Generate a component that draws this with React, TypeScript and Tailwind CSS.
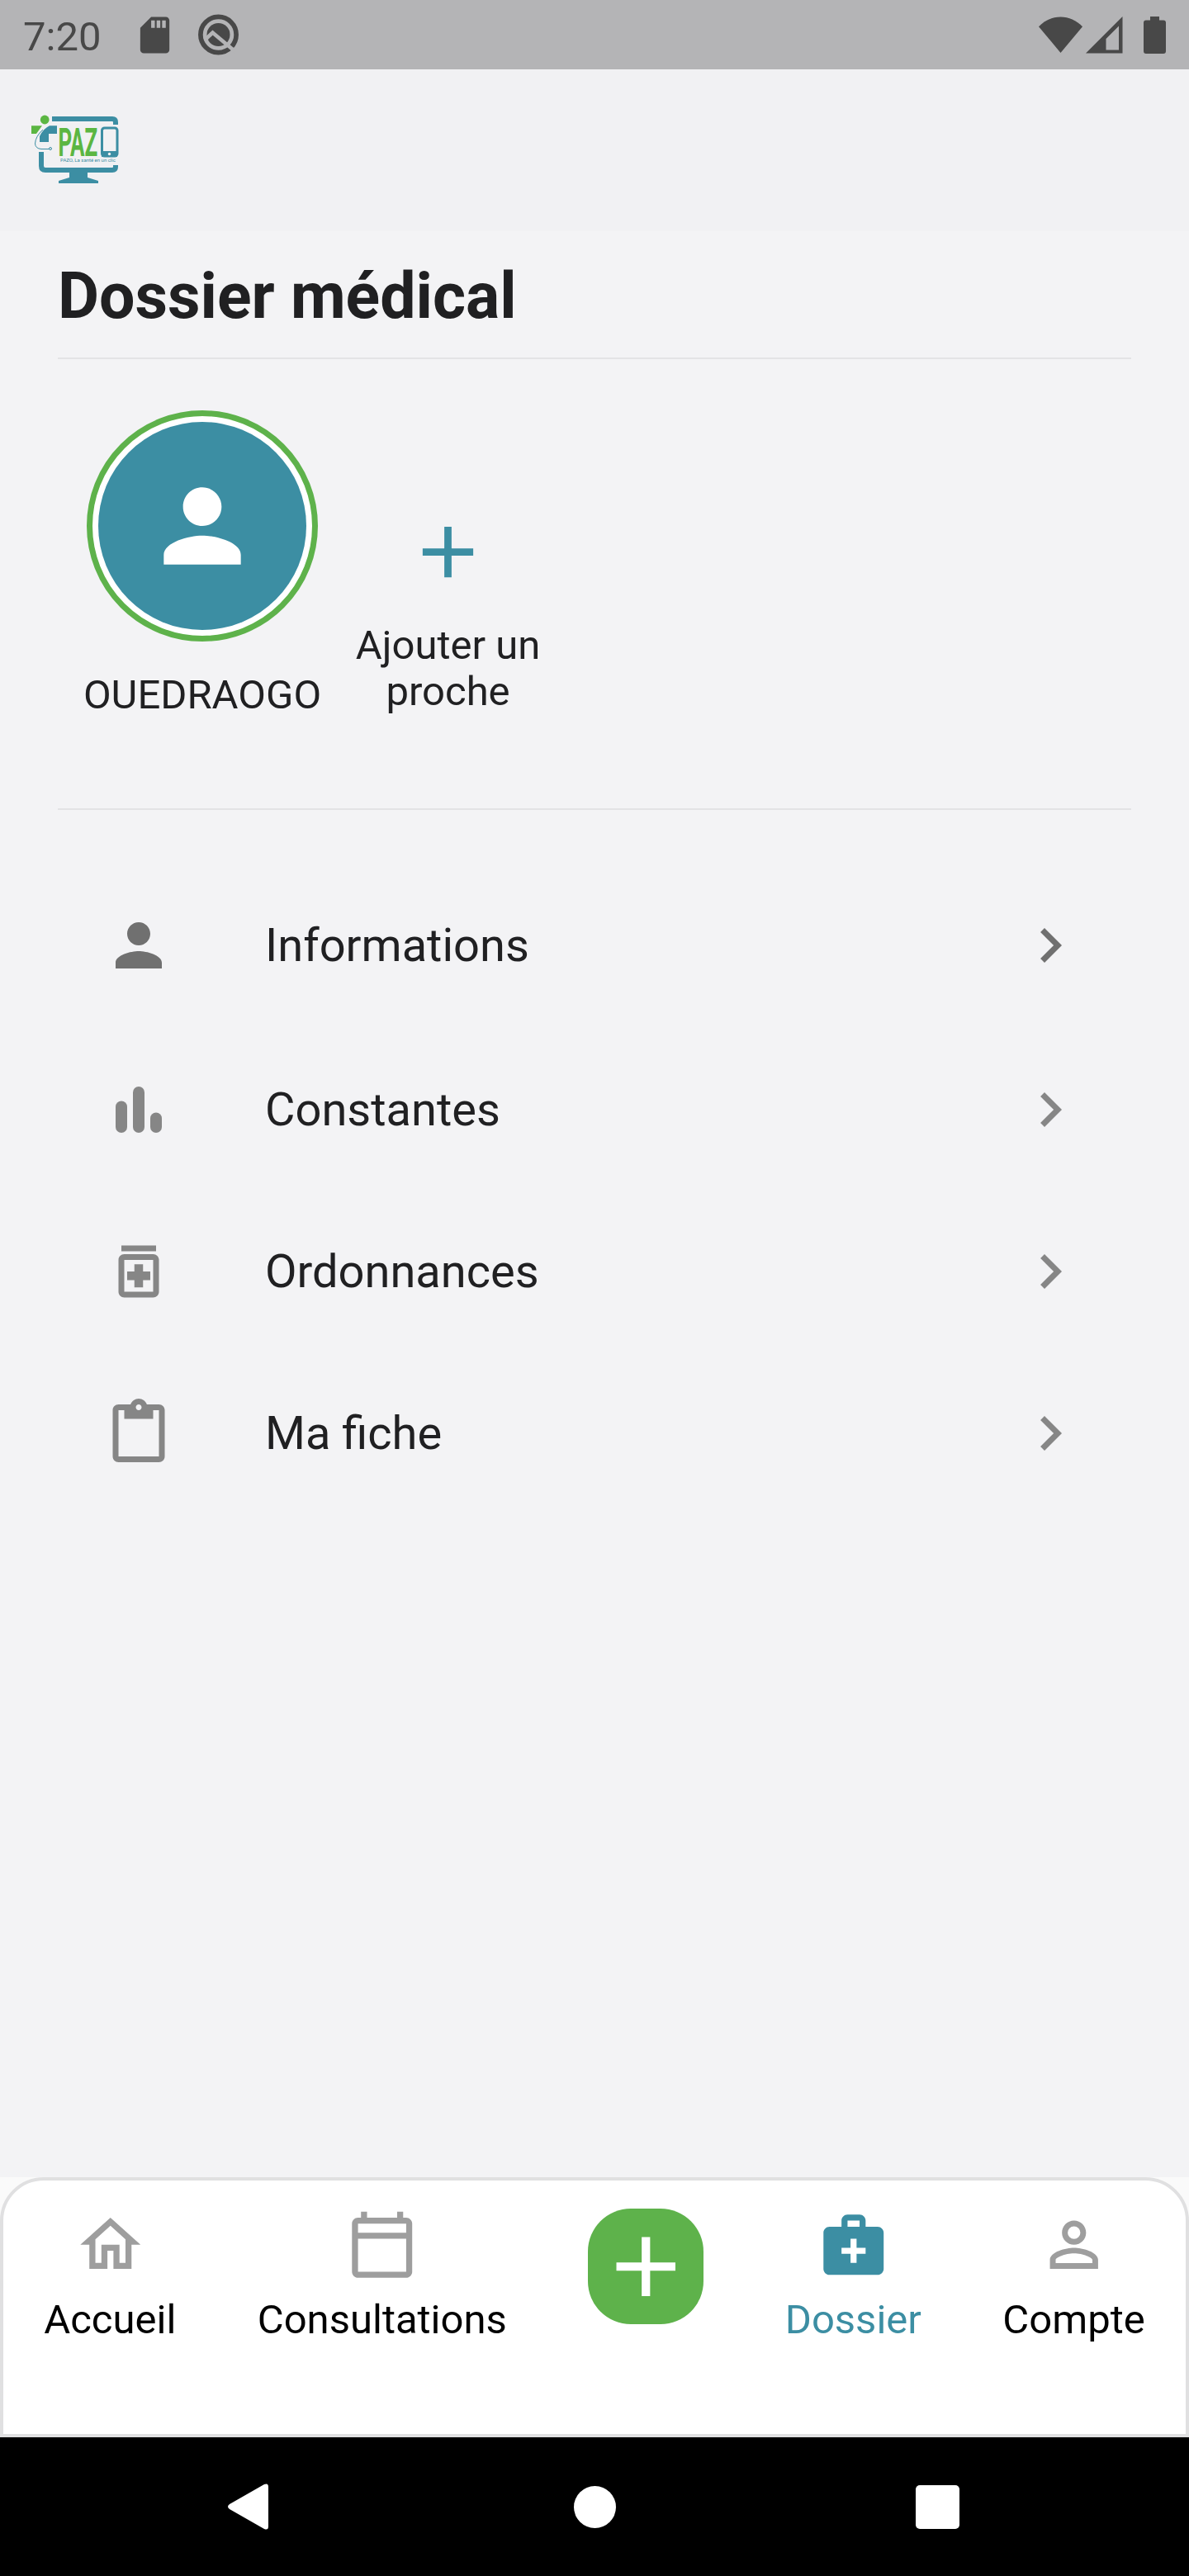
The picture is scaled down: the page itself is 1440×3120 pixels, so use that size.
import type { ReactNode } from 'react';
import {
  MdAdd,
  MdChevronRight,
  MdContentPaste,
  MdMedicalServices,
  MdOutlineCalendarToday,
  MdOutlineHome,
  MdPerson,
  MdPersonOutline,
  MdSdCard,
} from 'react-icons/md';

function StatusBar() {
  return (
    <div className="flex h-[84px] items-center justify-between bg-[#b4b4b6] pl-[28px] pr-[28px] text-[#484848]">
      <div className="flex items-center">
        <span className="w-[133px] pt-[5px] text-[49px] leading-[84px]">7:20</span>
        <MdSdCard className="size-[53px]" />
        <svg viewBox="0 0 50 50" className="ml-[26px] size-[50px]" fill="none">
          <circle cx="24.5" cy="25" r="21.6" stroke="currentColor" strokeWidth="5.7" />
          <circle cx="24.5" cy="25" r="14" fill="currentColor" />
          <path d="M8 31.5 17.5 22.5 45 45.5" stroke="#b4b4b6" strokeWidth="4.6" />
        </svg>
      </div>
      <div className="flex items-center">
        <svg viewBox="0 0 53 44" className="h-[44px] w-[53px]" fill="currentColor">
          <path d="M26.5 44 0 12.2C7.5 4.6 16.5.5 26.5.5S45.5 4.6 53 12.2Z" />
        </svg>
        <svg viewBox="0 0 45 45" className="ml-[4px] size-[45px]" fill="currentColor" fillRule="evenodd">
          <path d="M44.5 0V44.5H0ZM40 11.5 24.5 27V40.5H40Z" />
        </svg>
        <svg viewBox="0 0 27 45" className="ml-[25px] h-[45px] w-[27px]" fill="currentColor">
          <path d="M8 0h11v4.5h5a3 3 0 0 1 3 3V42a3 3 0 0 1-3 3H3a3 3 0 0 1-3-3V7.5a3 3 0 0 1 3-3h5Z" />
        </svg>
      </div>
    </div>
  );
}

function Logo() {
  return (
    <svg viewBox="0 0 106 84" className="h-[84px] w-[106px]">
      <g fill="none" stroke="#3c8ea3" strokeWidth="6">
        <path d="M25 5H98Q102 5 102 9V12" />
        <path d="M12 45V62Q12 67 17 67H98Q102 67 102 63V61" />
      </g>
      <path d="M46 69H68V76L81 80V83H33V80L46 76Z" fill="#3c8ea3" />
      <circle cx="16.2" cy="6" r="5.4" fill="#5bb642" />
      <path d="M0 13.2H13L6 23H0Z" fill="#5bb642" />
      <path d="M31 13.2V23H21V33H10V26Q14 17 22 13.2Z" fill="#3c8ea3" />
      <path d="M14 18Q5 26 4.5 35 5 41 12 41.5H22" fill="none" stroke="#3c8ea3" strokeWidth="1" />
      <circle cx="23" cy="41" r="1.5" fill="none" stroke="#3c8ea3" strokeWidth="1" />
      <text
        transform="translate(32.5 50) scale(.54 1)"
        fontFamily="Roboto, sans-serif"
        fontSize="48"
        fontWeight="700"
        fill="#5bb642"
      >
        PAZ
      </text>
      <rect x="85.5" y="16" width="18.5" height="34" rx="3" fill="none" stroke="#3c8ea3" strokeWidth="3" />
      <path d="M85 44h19v7H85Z" fill="#3c8ea3" />
      <circle cx="94.5" cy="47.5" r="1.7" fill="#f1f1f3" />
      <text x="35" y="56.5" fontFamily="Roboto, sans-serif" fontSize="6" fill="#3c8ea3">
        PAZO, La santé en un clic
      </text>
    </svg>
  );
}

function BarsIcon({ className }: { className?: string }) {
  return (
    <svg viewBox="0 0 24 24" className={className} fill="currentColor">
      <rect x="4" y="9" width="4" height="11" rx="2" />
      <rect x="10" y="4" width="4" height="16" rx="2" />
      <rect x="16" y="13" width="4" height="7" rx="2" />
    </svg>
  );
}

function MedicationIcon({ className }: { className?: string }) {
  return (
    <svg viewBox="0 0 24 24" className={className} fill="currentColor">
      <path d="M6 3h12v2H6zM17 6H7c-1.1 0-2 .9-2 2v11c0 1.1.9 2 2 2h10c1.1 0 2-.9 2-2V8c0-1.1-.9-2-2-2zm0 13H7V8h10v11z" />
      <path d="M10.5 9.5h3V12H16v3h-2.5v2.5h-3V15H8v-3h2.5z" />
    </svg>
  );
}

interface MenuRowProps {
  icon: ReactNode;
  label: string;
  className?: string;
}

function MenuRow({ icon, label, className = 'h-[196px] text-[#868686]' }: MenuRowProps) {
  return (
    <li className={`flex items-center pl-[56px] pr-[56px] ${className}`}>
      {icon}
      <span className="ml-[111px] flex-1 text-[56px] leading-[64px] text-[#202022]">{label}</span>
      <MdChevronRight className="size-[84px]" />
    </li>
  );
}

interface NavItemProps {
  icon: ReactNode;
  label: string;
  active?: boolean;
}

function NavItem({ icon, label, active = false }: NavItemProps) {
  return (
    <a className={`flex flex-col items-center ${active ? 'text-[#3c8ea3]' : 'text-[#9e9e9e]'}`}>
      {icon}
      <span className={`mt-[18px] text-[49px] leading-[58px] ${active ? '' : 'text-black'}`}>{label}</span>
    </a>
  );
}

export default function App() {
  return (
    <div className="flex h-[3120px] w-[1440px] flex-col overflow-hidden bg-[#f3f3f5] font-['Roboto',sans-serif] text-[#202022]">
      <StatusBar />
      <header className="h-[196px] bg-[#f1f1f3] pl-[38px] pt-[55px]">
        <Logo />
      </header>

      <main className="flex-1 px-[70px]">
        <h1 className="h-[153px] pt-[34px] text-[77px] font-bold leading-[90px]">Dossier médical</h1>
        <hr className="h-[2px] border-0 bg-[#e3e3e5]" />

        <section className="flex h-[544px] pl-[32px] pt-[62px]">
          <div className="flex w-[286px] flex-col items-center">
            <div className="flex size-[280px] items-center justify-center rounded-full border-[7px] border-[#5eb24b] bg-white">
              <div className="flex size-[252px] items-center justify-center rounded-full bg-[#3c8ea3]">
                <MdPerson className="size-[140px] text-white" />
              </div>
            </div>
            <span className="mt-[36px] text-[49px] leading-[58px]">OUEDRAOGO</span>
          </div>
          <div className="ml-[33px] flex w-[243px] flex-col items-center pt-[119px]">
            <MdAdd className="size-[105px] text-[#3c8ea3]" />
            <span className="mt-[33px] text-center text-[49px] leading-[56px]">Ajouter un proche</span>
          </div>
        </section>
        <hr className="h-[2px] border-0 bg-[#e3e3e5]" />

        <ul className="pt-[64px]">
          <MenuRow icon={<MdPerson className="size-[84px]" />} label="Informations" className="mb-px h-[200px] text-[#707070]" />
          <MenuRow icon={<BarsIcon className="size-[84px]" />} label="Constantes" />
          <MenuRow icon={<MedicationIcon className="size-[84px]" />} label="Ordonnances" />
          <MenuRow icon={<MdContentPaste className="size-[84px]" />} label="Ma fiche" />
        </ul>
      </main>

      <div className="bg-[#fafafa]">
        <nav className="flex h-[315px] items-start justify-around rounded-t-[53px] border-4 border-[#e0e0e1] bg-white pt-[34px]">
          <NavItem icon={<MdOutlineHome className="size-[87.5px]" />} label="Accueil" />
          <NavItem icon={<MdOutlineCalendarToday className="size-[87.5px]" />} label="Consultations" />
          <button className="flex size-[140px] items-center justify-center rounded-[52px] bg-[#5eb24b]">
            <MdAdd className="size-[122.5px] text-white" />
          </button>
          <NavItem icon={<MdMedicalServices className="size-[87.5px]" />} label="Dossier" active />
          <NavItem icon={<MdPersonOutline className="size-[87.5px]" />} label="Compte" />
        </nav>
      </div>

      <div className="flex h-[168px] items-center bg-black pl-[276px] text-white">
        <svg viewBox="0 0 49 56" className="h-[56px] w-[49px]" fill="currentColor">
          <path d="M2 25 44 1Q49-1 49 4V52Q49 57 44 55L2 31Q-2 28 2 25Z" />
        </svg>
        <span className="ml-[370px] size-[51px] rounded-full bg-white" />
        <span className="ml-[363px] size-[53px] rounded-[5px] bg-white" />
      </div>
    </div>
  );
}
